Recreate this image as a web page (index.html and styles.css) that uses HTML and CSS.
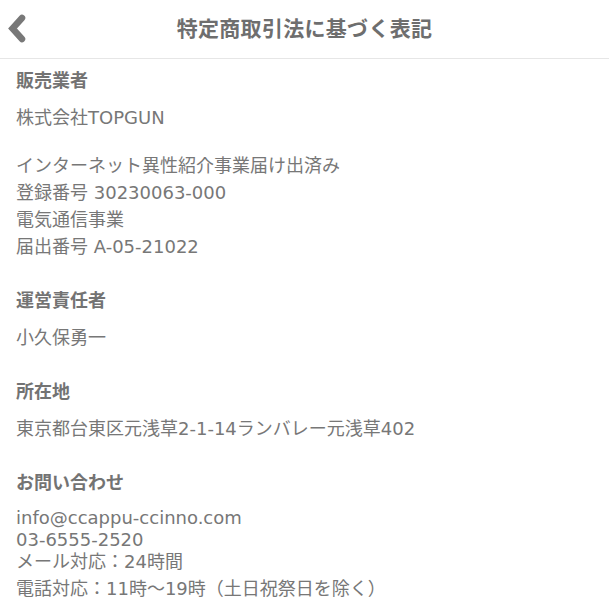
FILE: index.html
```html
<!DOCTYPE html>
<html lang="ja">
<head>
<meta charset="utf-8">
<title>特定商取引法に基づく表記</title>
<link rel="stylesheet" href="styles.css">
</head>
<body>
<header class="topbar">
  <a class="back" href="#" aria-label="戻る">
    <svg width="28" height="32" viewBox="0 0 28 32"><polyline points="17,6 7.5,16.5 17,27" fill="none" stroke="#787878" stroke-width="6.5" stroke-linecap="round" stroke-linejoin="miter"/></svg>
  </a>
  <h1 class="title">特定商取引法に基づく表記</h1>
</header>
<main class="content">
  <section class="block">
    <h2 class="label">販売業者</h2>
    <div class="text">
      <div class="line">株式会社TOPGUN</div>
      <div class="line blank"></div>
      <div class="line">インターネット異性紹介事業届け出済み</div>
      <div class="line">登録番号 30230063-000</div>
      <div class="line">電気通信事業</div>
      <div class="line">届出番号 A-05-21022</div>
    </div>
  </section>
  <section class="block">
    <h2 class="label">運営責任者</h2>
    <div class="text">
      <div class="line">小久保勇一</div>
    </div>
  </section>
  <section class="block">
    <h2 class="label">所在地</h2>
    <div class="text">
      <div class="line">東京都台東区元浅草2-1-14ランバレー元浅草402</div>
    </div>
  </section>
  <section class="block">
    <h2 class="label">お問い合わせ</h2>
    <div class="text contact">
      <div class="line short">info@ccappu-ccinno.com</div>
      <div class="line short">03-6555-2520</div>
      <div class="line short">メール対応：24時間</div>
      <div class="line tall">電話対応：11時～19時（土日祝祭日を除く）</div>
    </div>
  </section>
</main>
</body>
</html>
```
FILE: styles.css
```css
html, body {
  margin: 0;
  padding: 0;
  background: #ffffff;
}
body {
  font-family: "DejaVu Sans", "Noto Sans CJK JP", sans-serif;
  color: #777777;
}
.topbar {
  position: relative;
  height: 58px;
  border-bottom: 1px solid #e6e6e6;
  display: flex;
  align-items: center;
  justify-content: center;
}
.back {
  position: absolute;
  left: 5px;
  top: 12px;
  display: block;
  line-height: 0;
}
.title {
  margin: 0;
  font-size: 21px;
  font-weight: bold;
  color: #6e6e6e;
  line-height: 27px;
  letter-spacing: 0.3px;
}
.content {
  padding: 8px 16px 0 16px;
}
.block {
  margin-bottom: 27px;
}
.label {
  margin: 0 0 10px 0;
  font-size: 18px;
  font-weight: bold;
  line-height: 27px;
  color: #737373;
}
.text {
  font-size: 18px;
}
.line {
  line-height: 27px;
  white-space: nowrap;
}
.line.blank {
  height: 21px;
}
.contact {
  padding-top: 1px;
}
.line.short {
  line-height: 22px;
}
.line.tall {
  line-height: 32px;
}
```
